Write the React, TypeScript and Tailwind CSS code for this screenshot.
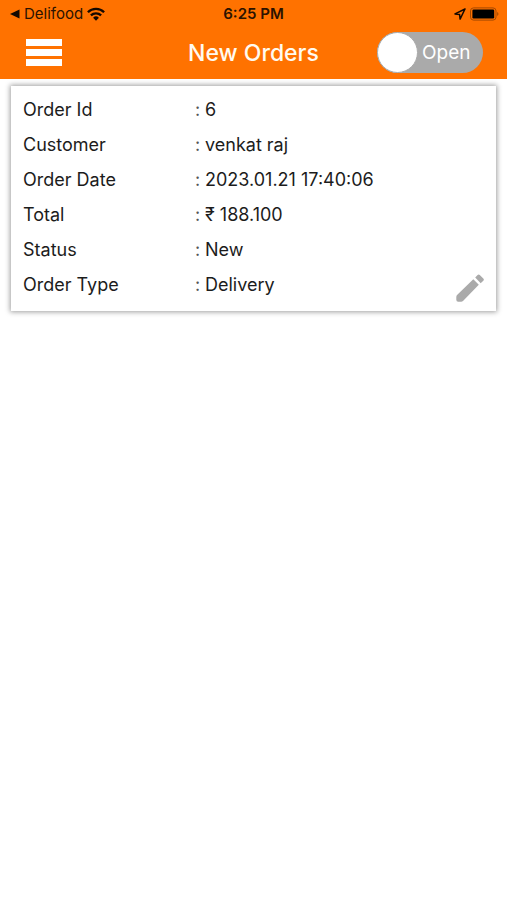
import { useState } from "react";

const order = [
    { label: "Order Id", value: "6" },
    { label: "Customer", value: "venkat raj" },
    { label: "Order Date", value: "2023.01.21 17:40:06" },
    { label: "Total", value: "₹ 188.100" },
    { label: "Status", value: "New" },
    { label: "Order Type", value: "Delivery" },
];

const StatusBar = () => {
    return <div className="grid h-7 grid-cols-[1fr_auto_1fr] items-center px-2 pb-px text-[15px] leading-none text-[#2b1200]">
        <div className="flex items-center">
            <a href="#delifood" className="flex items-center gap-1 pl-0.5">
                <svg className="h-2.5 w-2.5" viewBox="0 0 10 10" fill="#140800" aria-hidden="true">
                    <path d="M0 5 9.5 0.5v9z" />
                </svg>
                <span>Delifood</span>
            </a>
            <svg className="ml-1 h-3.5 w-[18px]" viewBox="0 0 18 14" fill="none" stroke="#140800" strokeWidth="2.3" aria-label="Wi-Fi">
                <path d="M0.9 5.3a11.4 11.4 0 0 1 16.2 0" />
                <path d="M3.9 8.4a7.2 7.2 0 0 1 10.2 0" />
                <path d="M9 13.7 6.1 10.8a4.1 4.1 0 0 1 5.8 0z" fill="#140800" stroke="none" />
            </svg>
        </div>
        <span className="font-semibold">6:25 PM</span>
        <div className="flex items-center justify-end gap-1">
            <svg className="h-3 w-3" viewBox="0 0 12 12" fill="none" stroke="#140800" strokeWidth="1.5" strokeLinejoin="round" aria-hidden="true">
                <path d="M11 1 1 5.9l4.6.6.5 4.6z" />
            </svg>
            <svg className="h-3.5 w-[29px]" viewBox="0 0 29 14" aria-label="Battery">
                <rect x="0.5" y="0.9" width="25.5" height="12.2" rx="3" fill="none" stroke="#a54900" />
                <rect x="2.4" y="2.5" width="21.8" height="9" rx="1.2" fill="#000" />
                <path d="M27.2 5.1c1.7.6 1.7 3.2 0 3.8z" fill="#a54900" />
            </svg>
        </div>
    </div>
}

const NavBar = () => {
    const [paused, setPaused] = useState(false);

    return <div className="grid grid-cols-[1fr_auto_1fr] items-center px-6 pb-1.5 pt-1">
        <button type="button" aria-label="Menu" className="flex w-10 flex-col gap-[3px] px-0.5 py-1.5">
            <span className="h-[7px] w-full bg-white"></span>
            <span className="h-[7px] w-full bg-white"></span>
            <span className="h-[7px] w-full bg-white"></span>
        </button>
        <h1 className="text-[23px] leading-8 font-medium text-[#fffaf0]">New Orders</h1>
        <label className="flex h-[41px] w-[106px] cursor-pointer items-center justify-self-end rounded-full bg-[#aaaaaa] has-checked:flex-row-reverse">
            <input
                type="checkbox"
                role="switch"
                className="sr-only"
                checked={paused}
                onChange={(e) => setPaused(e.target.checked)}
            />
            <span className="h-[41px] w-[41px] shrink-0 rounded-full border border-[#aaaaaa] bg-white"></span>
            <span className="flex-1 pl-1 pt-0.5 text-[19px] text-white">Open</span>
        </label>
    </div>
}

const OrderCard = () => {
    return <section className="mx-[11px] mt-[7px] flex items-end bg-white pb-[9px] pl-3 pr-2.5 pt-1.5 shadow-[0_0_5px_1px_rgba(0,0,0,0.38)]">
        <dl className="flex-1 text-lg leading-[35px] text-[#1c1c1c]">
            {order.map((row) => {
                return <div key={row.label} className="flex">
                    <dt className="w-[172px]">{row.label}</dt>
                    <dd className="flex">
                        <span className="w-2.5 text-[#555555]">:</span>
                        <span>{row.value}</span>
                    </dd>
                </div>
            })}
        </dl>
        <button type="button" aria-label="Edit order" className="px-0.5">
            <svg className="h-7 w-7" viewBox="0 0 28 28" fill="#aaaaaa" aria-hidden="true">
                <path d="M0.8 21.2 17.3 5.2l5.5 5.5L7 26.9q-.8.8-1.9.8H2.2Q0.3 27.7 0.3 25.8v-2.7q0-1.1.5-1.9z" />
                <path d="M19.2 3.4 21.6 1q1.1-1.1 2.2 0L27.3 4.6q1.1 1.1 0 2.2l-2.6 2.4z" />
            </svg>
        </button>
    </section>
}

const App = () => {
    return <div className="min-h-screen bg-white font-[Inter,sans-serif]">
        <header className="bg-[#ff7200]">
            <StatusBar />
            <NavBar />
        </header>
        <main>
            <OrderCard />
        </main>
    </div>
}

export default App;
